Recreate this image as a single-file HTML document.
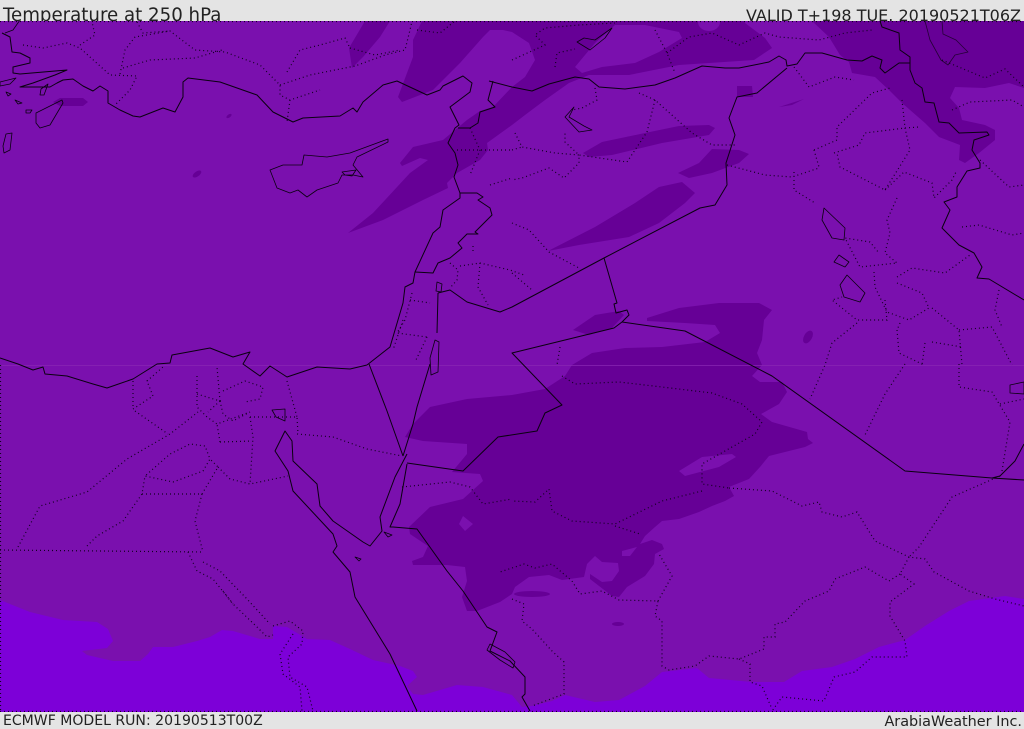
<!DOCTYPE html>
<html><head><meta charset="utf-8"><style>
html,body{margin:0;padding:0;background:#e4e4e4;width:1024px;height:729px;overflow:hidden}
svg{display:block}
text{font-family:"DejaVu Sans","Liberation Sans",sans-serif;fill:#222}
.c{fill:none;stroke:#0a0010;stroke-width:1;stroke-linejoin:round}
.i{fill:none;stroke:#0a0010;stroke-width:.8;stroke-linejoin:round}
.d{fill:none;stroke:#120020;stroke-width:1.2;stroke-dasharray:1 3}
</style></head><body>
<svg width="1024" height="729" viewBox="0 0 1024 729" xmlns="http://www.w3.org/2000/svg">
<rect width="1024" height="729" fill="#e4e4e4"/>
<text x="3" y="21" font-size="18.2">Temperature at 250 hPa</text>
<text x="1021" y="21" font-size="16" text-anchor="end">VALID T+198 TUE. 20190521T06Z</text>
<text x="3" y="725" font-size="14.05">ECMWF MODEL RUN: 20190513T00Z</text>
<text x="1022" y="726" font-size="14.4" text-anchor="end">ArabiaWeather Inc.</text>
<rect x="0" y="21" width="1024" height="691" fill="#7a10ae"/>
<svg x="0" y="21" width="1024" height="691" viewBox="0 21 1024 691">
<!-- bright -->
<path fill="#7d00d8" d="M0,600 L30,612 63,620 97,622 108,629 113,641 107,648 82,651 87,655 113,661 140,661 148,654 153,647 173,647 197,641 210,637 222,630 233,631 260,639 273,639 273,626 287,627 307,639 330,640 350,649 373,660 400,666 413,671 417,677 407,686 413,694 423,695 457,685 483,687 512,695 522,707 532,706 552,701 565,695 595,702 619,700 645,686 662,672 697,668 709,678 752,682 784,682 802,671 832,667 855,659 879,647 905,640 925,626 949,611 969,601 1005,596 1024,599 L1024,712 0,712 Z"/>
<!-- dark central -->
<path fill="#660096" d="M647,318 L679,308 719,303 759,303 772,310 764,320 762,340 757,353 762,365 752,376 760,382 782,382 787,392 779,404 761,414 772,422 807,432 808,439 813,443 805,447 769,456 760,467 749,479 729,487 734,496 725,501 712,506 699,512 679,519 662,521 655,527 645,536 640,544 652,540 662,544 664,549 655,554 654,564 645,576 627,587 619,597 612,596 590,579 590,574 602,582 612,581 619,571 618,563 602,562 595,556 587,564 584,577 562,580 549,575 529,577 515,587 512,594 500,602 477,611 467,611 462,597 467,581 465,567 447,565 413,565 412,561 423,557 428,546 410,534 409,527 430,507 463,499 483,481 480,474 452,472 467,454 467,444 423,441 405,437 413,424 430,407 467,399 512,395 545,389 565,376 572,365 592,353 625,348 662,347 705,342 720,333 715,325 685,323 647,321 Z"/>
<path fill="#7a10ae" d="M679,471 L702,457 732,454 736,457 719,467 685,476 Z M463,516 L473,524 465,531 459,524 Z M622,551 L637,547 630,556 622,556 Z"/>
<ellipse cx="532" cy="594" rx="18" ry="3" fill="#660096"/>
<ellipse cx="618" cy="624" rx="6" ry="2" fill="#660096"/>
<ellipse cx="808" cy="337" rx="4" ry="7" transform="rotate(30 808 337)" fill="#660096"/>
<path fill="#660096" d="M573,330 L595,315 619,311 624,315 612,328 589,335 Z"/>
<path fill="#660096" d="M548,251 L595,227 635,203 659,187 682,182 695,193 685,203 659,223 629,237 579,245 Z"/>
<path fill="#660096" d="M583,153 L602,142 645,133 679,126 709,125 715,128 709,135 662,143 612,155 589,157 Z"/>
<path fill="#660096" d="M678,173 L699,163 712,149 739,150 749,154 739,163 712,173 689,178 Z"/>
<path fill="#660096" d="M737,86 L752,86 753,97 737,97 Z M779,107 L804,99 792,105 Z"/>
<!-- top dark -->
<path fill="#660096" d="M365,21 L390,21 380,37 363,57 352,68 349,48 Z"/>
<path fill="#660096" d="M422,21 L413,40 413,57 398,97 402,102 433,90 460,63 483,37 490,30 503,30 512,32 529,43 535,60 525,77 512,87 493,107 480,111 467,120 443,140 413,147 400,163 402,166 420,158 428,160 410,173 373,213 348,233 383,220 423,200 448,188 447,183 457,173 480,160 488,150 487,143 512,125 525,115 545,100 569,83 589,75 629,75 679,65 754,60 772,48 765,38 745,23 744,21 Z"/>
<path fill="#7a10ae" d="M575,67 L595,43 615,25 645,25 679,32 682,38 659,52 635,63 602,67 582,73 Z"/>
<ellipse cx="709" cy="22" rx="11" ry="9" fill="#7a10ae"/>
<path fill="#660096" d="M812,21 L829,37 840,55 849,62 852,73 875,77 889,90 902,103 925,123 939,137 960,145 959,160 965,163 979,153 995,140 995,130 985,125 962,120 959,108 950,98 955,87 985,88 1009,83 1024,88 L1024,21 Z"/>
<path fill="#660096" d="M53,102 L60,98 83,98 88,102 83,106 60,106 Z"/>
<ellipse cx="197" cy="174" rx="5" ry="2.5" transform="rotate(-35 197 174)" fill="#660096"/>
<ellipse cx="229" cy="116" rx="3" ry="1.5" transform="rotate(-35 229 116)" fill="#660096"/>
<rect x="0" y="365" width="1024" height="1" fill="#8a28b4" opacity=".7"/>
<!-- internal borders -->
<path class="d" d="M23,45 L43,48 67,43 80,48 110,75 137,76 130,90 115,105
M120,74 L125,50 135,37 170,31 195,50 225,52 260,65 280,85 280,95 290,100 320,90
M80,45 L95,35 92,22 M137,22 L143,33 170,31 M123,68 L150,60 195,58 222,50
M280,85 L310,75 355,66 385,55 405,50 410,30 412,21 M287,72 L300,50 320,45 345,38 350,48 M290,100 L287,122 M350,48 L375,55 400,50 M417,30 L440,33 455,21
M512,60 L545,45 535,35 545,28 579,25 615,23 M555,67 L557,53 575,49 M655,30 L667,53 675,73
M667,53 L689,37 712,33 739,45 765,33 779,37 819,40 845,33 872,30
M595,88 L597,100 582,108 572,110 M655,100 L647,132 627,162 579,155 565,142 565,132
M639,93 L655,100 692,133 712,145 735,145 M727,165 L765,175 792,177 819,168
M794,172 L794,190 815,203 M814,150 L819,167 M814,150 L837,140 837,127 872,93 890,88
M834,153 L859,145 865,133 905,128 919,127 M902,100 L905,128 910,150 885,190 840,167 837,153
M885,190 L904,172 932,183 934,198 952,180 957,170 M980,160 L1009,187 1024,185
M952,110 L970,102 1012,100 1024,107 M942,60 L985,78 1005,69 1024,87 M794,67 L809,87 835,77 854,80
M897,198 L887,220 890,233 885,253 897,263 860,267 845,238 870,242 879,253
M897,277 L912,268 945,273 970,255 M897,283 L922,293 929,308 909,320 887,312 875,287 874,272
M885,300 L887,320 857,320 832,300 842,297 M857,323 L832,343 825,365 810,399
M897,330 L899,353 924,365 M900,323 L897,330 M932,308 L959,330 962,365 M925,343 L922,365 M932,342 L962,347
M959,330 L992,327 1012,365 M999,290 L995,310 1002,327 M962,227 L979,225 1012,235 1024,233
M905,364 L885,394 864,437 M959,364 L959,387 992,392 1010,422 1002,471 M1000,404 L1024,399
M1000,476 L952,497 919,547 909,557
M729,488 L772,491 802,506 819,502 822,512 842,517 857,512 875,541 909,557 925,559 934,572 969,591 995,599 1024,606
M909,557 L900,574 914,584 890,602 890,616 905,641 907,657 872,657 855,672 834,677 824,701 782,697 772,711
M900,574 L889,581 865,567 835,579 829,591 805,601 785,622 775,624 775,637 764,637 764,649 739,659 709,656 695,666 669,670 662,666 662,621 655,616 658,601 619,600 602,591 580,594 572,581 552,564 535,568 524,564 512,568 500,572
M739,659 L750,664 750,682 762,686 772,709 M658,601 L672,576 659,554
M512,599 L524,604 522,621 532,629 552,651 564,662 564,694 532,706
M562,376 L575,384 619,382 662,387 712,393 742,404 762,422 755,434 702,464 702,484 729,488
M702,491 L662,501 615,524 572,521 552,511 549,489 535,502 512,501 M615,526 L640,534
M402,487 L450,482 470,487 483,504 512,499
M297,434 L333,437 367,449 402,456
M0,550 L202,552 M18,547 L40,506 87,492 127,459 170,434 198,412
M87,546 L97,536 123,521 142,494 145,476 173,482 203,471 210,459 205,446 190,444 170,454 145,476
M142,494 L202,494 218,467 210,459 M202,494 L195,521 203,552
M218,467 L230,479 250,484 288,476 M250,417 L253,437 250,484 M220,442 L252,441 M220,442 L217,424
M250,417 L297,417 298,434 M287,381 L297,417
M133,381 L133,409 153,396 147,381 163,367 M135,411 L168,434
M197,376 L197,407 207,417 217,424 250,412 M197,394 L220,401 208,412 M220,401 L217,367
M220,401 L223,414 233,421 250,412 M223,391 L245,381 263,387 260,399 245,402
M188,552 L197,571 213,579 233,604 257,627 267,637 273,635
M203,562 L220,571 247,599 270,624 M223,591 L233,604
M273,626 L290,621 303,631 302,644 288,657 290,677 307,687 313,711
M293,634 L280,654 283,674 300,687 302,711
M412,293 L405,320 397,333 427,337 M450,263 L458,270 457,280 450,288 M460,266 L480,263 510,270 524,275 M480,263 L478,287 488,305
M512,223 L529,230 549,252 579,268 M512,273 L532,290 M560,347 L557,365 M410,300 L430,303 M403,320 L393,350 M427,337 L415,362
M515,133 L522,147 555,153 579,155 579,163 564,178 549,168 522,178 512,180 M512,150 L522,147 M473,246 L473,252
M457,150 L512,150 M470,128 L480,150 470,175 M490,185 L512,178"/>
<line class="d" x1="0" y1="21.5" x2="1024" y2="21.5"/>
<line class="d" x1="0" y1="711.5" x2="1024" y2="711.5"/>
<line class="d" x1="0.5" y1="365" x2="0.5" y2="712"/>
<!-- coasts -->
<path class="c" d="M2,33 L10,37 12,52 20,53 30,58 30,63 13,67 13,73 20,74 67,70 55,75 33,83 20,87 50,87 57,83 63,80 73,79 83,86 93,91 100,86 108,91 108,103 120,110 133,116 140,117 163,108 175,112 183,97 183,82 188,78 220,82 257,95 273,112 293,122 303,118 340,116 353,108 357,112 363,102 383,85 397,81 427,95 440,90 443,86 463,76 472,83 470,92 450,107 459,125 455,128 448,143 455,153 458,165 454,177 460,193 460,198 443,210 440,227 433,233 415,272 413,283 405,287 403,303 390,347 367,365 350,369 317,367 287,377 270,366 260,376 243,364 250,352 233,357 210,348 172,355 170,363 157,364 133,379 107,388 93,384 67,376 45,374 43,367 33,370 18,364 0,358"/>
<path class="i" d="M270,170 L283,165 302,165 304,155 327,157 350,153 388,139 388,142 357,157 353,165 363,177 353,175 342,175 338,183 317,190 307,197 298,190 290,193 277,188 Z M342,172 L356,170 352,176 345,175 Z"/>
<path class="i" d="M36,113 L62,100 63,103 50,125 40,128 36,123 Z M6,134 L12,133 10,150 4,153 3,146 Z M0,82 L16,78 10,84 0,86 Z M41,89 L48,84 44,95 40,95 Z M15,100 L22,103 18,104 Z M26,110 L32,110 30,113 26,113 Z M6,92 L11,94 8,96 Z M20,20 L13,30 5,33"/>
<path class="c" d="M489,81 L512,87 532,91 549,84 575,77 589,79 599,87 625,89 655,85 675,78 702,66 725,68 739,68 769,62 779,56 786,60 787,66 797,64 805,53 822,53 847,60 862,61 872,56 882,60 880,68 885,73 899,63 910,63"/>
<path class="c" d="M493,81 L488,100 495,107 480,112 478,123 470,128 458,128"/>
<path class="c" d="M460,193 L477,193 483,197 478,200 490,208 492,215 475,232 478,234 467,234 458,243 462,248 450,258 438,263 433,273 415,272"/>
<path class="c" d="M438,293 L450,290 467,302 500,312 512,307 604,258 700,208 715,205 727,185 726,163 735,135 729,118 737,97 757,93 787,68"/>
<path class="c" d="M604,258 L617,303 614,304 616,313 627,310 629,315 622,322 614,328 512,353 562,405 545,413 537,431 498,437 463,471 407,463"/>
<path class="c" d="M622,322 L685,331 772,376 905,471 992,478 1024,480 M992,478 L1000,476 1015,461 1024,444"/>
<path class="c" d="M369,364 L387,411 403,456 M438,293 L437,333 M430,364 L417,407 413,424 403,456"/>
<path class="i" d="M435,340 L439,342 438,372 431,375 430,358 Z M437,282 L442,284 441,292 436,291 Z"/>
<path class="c" d="M407,454 L395,477 380,517 382,531 370,546 363,542 333,521 320,506 317,484 293,461 292,441 285,431 275,451 288,471 293,491 333,534 337,546 333,552 350,572 355,597 390,654 417,711"/>
<path class="c" d="M407,464 L400,504 390,527 393,527 417,529 447,571 463,591 487,627 497,632 490,651 510,661 525,677 525,694 522,697 530,711"/>
<path class="i" d="M487,650 L490,644 505,652 515,662 513,668 500,660 Z M384,532 L392,535 388,537 Z M355,557 L361,559 359,561 Z"/>
<path class="c" d="M880,21 L882,27 899,33 900,50 910,57 910,70 915,83 922,88 925,102 934,103 939,122 949,123 959,133 987,132 989,135 974,140 972,150 980,163 980,168 967,171 957,187 957,197 944,202 950,210 942,228 959,245 974,253 982,267 977,278 989,279 1024,300"/>
<!-- lakes -->
<path class="i" opacity=".7" d="M925,21 L930,40 941,60 948,65 955,55 968,52 956,40 943,34 942,21"/>
<path class="i" d="M574,107 L565,117 579,132 592,130 584,126 569,117 Z M577,42 L584,38 595,40 612,28 605,38 590,50 Z"/>
<path class="i" d="M824,208 L822,220 832,238 844,240 845,228 Z M839,255 L834,262 845,267 849,262 Z M847,275 L840,285 844,297 860,302 865,293 852,280 Z M1010,385 L1024,382 1024,394 1010,393 Z"/>
<path class="i" d="M285,409 L272,410 276,417 285,421 Z"/>
</svg>
</svg>
</body></html>
